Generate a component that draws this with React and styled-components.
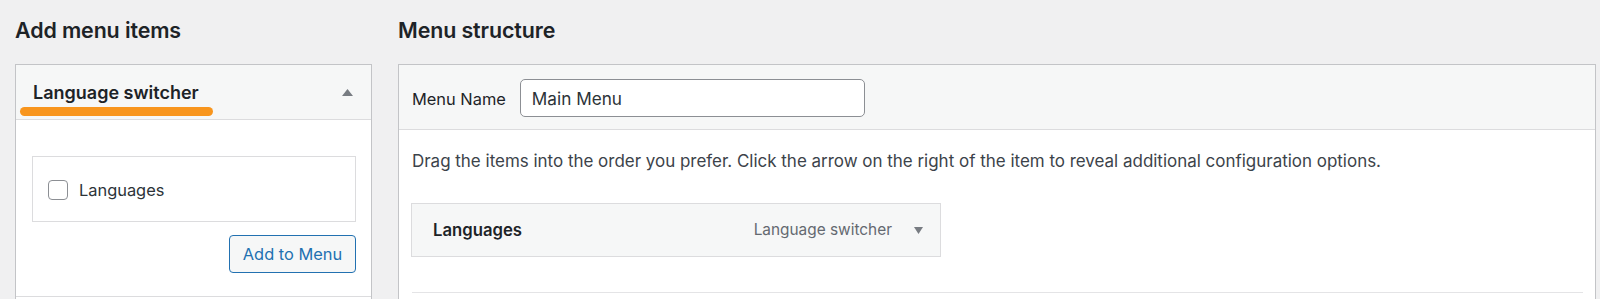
import React from "react";
import styled, { createGlobalStyle } from "styled-components";

const GlobalStyle = createGlobalStyle`
  html, body {
    margin: 0;
    padding: 0;
    background: #f0f0f1;
  }
  body {
    font-family: Inter, "Noto Sans", "Liberation Sans", sans-serif;
    color: #3c434a;
    -webkit-font-smoothing: antialiased;
  }
`;

const Page = styled.div`
  display: grid;
  grid-template-columns: 357px 1198px;
  column-gap: 26px;
  padding: 15px 4px 0 15px;
  height: 284px;
  overflow: hidden;
`;

const Column = styled.div`
  display: flex;
  flex-direction: column;
`;

const Heading = styled.h2`
  margin: 0 0 19px;
  font-size: 21.4px;
  line-height: 30px;
  font-weight: 600;
  color: #1d2327;
  letter-spacing: -0.1px;
`;

const Panel = styled.div`
  background: #fff;
  border: 1px solid #c3c4c7;
  border-bottom: none;
  flex: 1;
  display: flex;
  flex-direction: column;
`;

const SectionHeader = styled.div`
  position: relative;
  height: 54px;
  padding: 0 18px 0 17px;
  display: flex;
  align-items: center;
  justify-content: space-between;
  background: #f6f7f7;
  border-bottom: 1px solid #dcdcde;
`;

const SectionTitle = styled.span`
  font-size: 18px;
  line-height: 24px;
  font-weight: 600;
  color: #1d2327;
  padding-top: 1px;
`;

const Highlight = styled.span`
  position: absolute;
  left: 4px;
  top: 42px;
  width: 193px;
  height: 9px;
  border-radius: 5px;
  background: #f8951d;
`;

const SectionBody = styled.div`
  padding: 36px 15px 23px 16px;
  display: flex;
  flex-direction: column;
  align-items: flex-end;
  border-bottom: 1px solid #dcdcde;
`;

const CheckList = styled.div`
  align-self: stretch;
  border: 1px solid #dcdcde;
  display: flex;
  align-items: center;
  gap: 11px;
  padding: 2px 0 0 15px;
  box-sizing: border-box;
  height: 66px;
`;

const Checkbox = styled.span`
  width: 20px;
  height: 20px;
  box-sizing: border-box;
  border: 1px solid #8c8f94;
  border-radius: 4px;
  background: #fff;
`;

const CheckLabel = styled.span`
  font-size: 16.4px;
  line-height: 24px;
  color: #2c3338;
`;

const Button = styled.button`
  margin-top: 13px;
  height: 38px;
  width: 127px;
  padding: 0;
  border: 1px solid #2271b1;
  border-radius: 4px;
  background: #f6f7f7;
  color: #2271b1;
  font-family: inherit;
  font-size: 16.4px;
  line-height: 36px;
`;

const NextSection = styled.div`
  flex: 1;
  background: #fff;
`;

const MenuHeader = styled.div`
  height: 65px;
  box-sizing: border-box;
  padding: 14px 13px 13px;
  display: flex;
  align-items: center;
  gap: 14px;
  background: #f6f7f7;
  border-bottom: 1px solid #dcdcde;
`;

const FieldLabel = styled.label`
  font-size: 16.4px;
  line-height: 20px;
  color: #1d2327;
  padding-top: 2px;
`;

const NameInput = styled.div`
  width: 345px;
  height: 38px;
  box-sizing: border-box;
  border: 1px solid #8c8f94;
  border-radius: 5px;
  background: #fff;
  padding: 1px 11px 0;
  display: flex;
  align-items: center;
  font-size: 17.2px;
  color: #2c3338;
`;

const MenuBody = styled.div`
  flex: 1;
  padding: 19px 12px 0;
  display: flex;
  flex-direction: column;
  align-items: flex-start;
`;

const Description = styled.p`
  margin: 0 0 30px 1px;
  font-size: 16.97px;
  line-height: 24px;
  color: #3c434a;
`;

const MenuItem = styled.div`
  width: 530px;
  height: 54px;
  box-sizing: border-box;
  border: 1px solid #dcdcde;
  background: #f6f7f7;
  display: flex;
  align-items: center;
  padding: 0 17px 0 21px;
`;

const ItemTitle = styled.span`
  flex: 1;
  font-size: 16.7px;
  line-height: 24px;
  font-weight: 600;
  color: #1d2327;
`;

const ItemType = styled.span`
  font-size: 15.4px;
  line-height: 24px;
  color: #646970;
  margin-right: 22px;
`;

const Separator = styled.div`
  align-self: stretch;
  margin: 35px 0 0 1px;
  border-top: 1px solid #e4e4e6;
`;

function Arrow({ up, w, h }) {
  return (
    <svg width={w} height={h} viewBox={`0 0 ${w} ${h}`} fill="#787c82">
      {up ? (
        <polygon points={`0,${h} ${w / 2},0 ${w},${h}`} />
      ) : (
        <polygon points={`0,0 ${w},0 ${w / 2},${h}`} />
      )}
    </svg>
  );
}

export default function App() {
  return (
    <>
      <GlobalStyle />
      <Page>
        <Column>
          <Heading>Add menu items</Heading>
          <Panel>
            <SectionHeader>
              <SectionTitle>Language switcher</SectionTitle>
              <Arrow up w={11} h={7} />
              <Highlight />
            </SectionHeader>
            <SectionBody>
              <CheckList>
                <Checkbox />
                <CheckLabel>Languages</CheckLabel>
              </CheckList>
              <Button>Add to Menu</Button>
            </SectionBody>
            <NextSection />
          </Panel>
        </Column>
        <Column>
          <Heading>Menu structure</Heading>
          <Panel>
            <MenuHeader>
              <FieldLabel>Menu Name</FieldLabel>
              <NameInput>Main Menu</NameInput>
            </MenuHeader>
            <MenuBody>
              <Description>
                Drag the items into the order you prefer. Click the arrow on the right of the item to reveal additional configuration options.
              </Description>
              <MenuItem>
                <ItemTitle>Languages</ItemTitle>
                <ItemType>Language switcher</ItemType>
                <Arrow w={9} h={7} />
              </MenuItem>
              <Separator />
            </MenuBody>
          </Panel>
        </Column>
      </Page>
    </>
  );
}
